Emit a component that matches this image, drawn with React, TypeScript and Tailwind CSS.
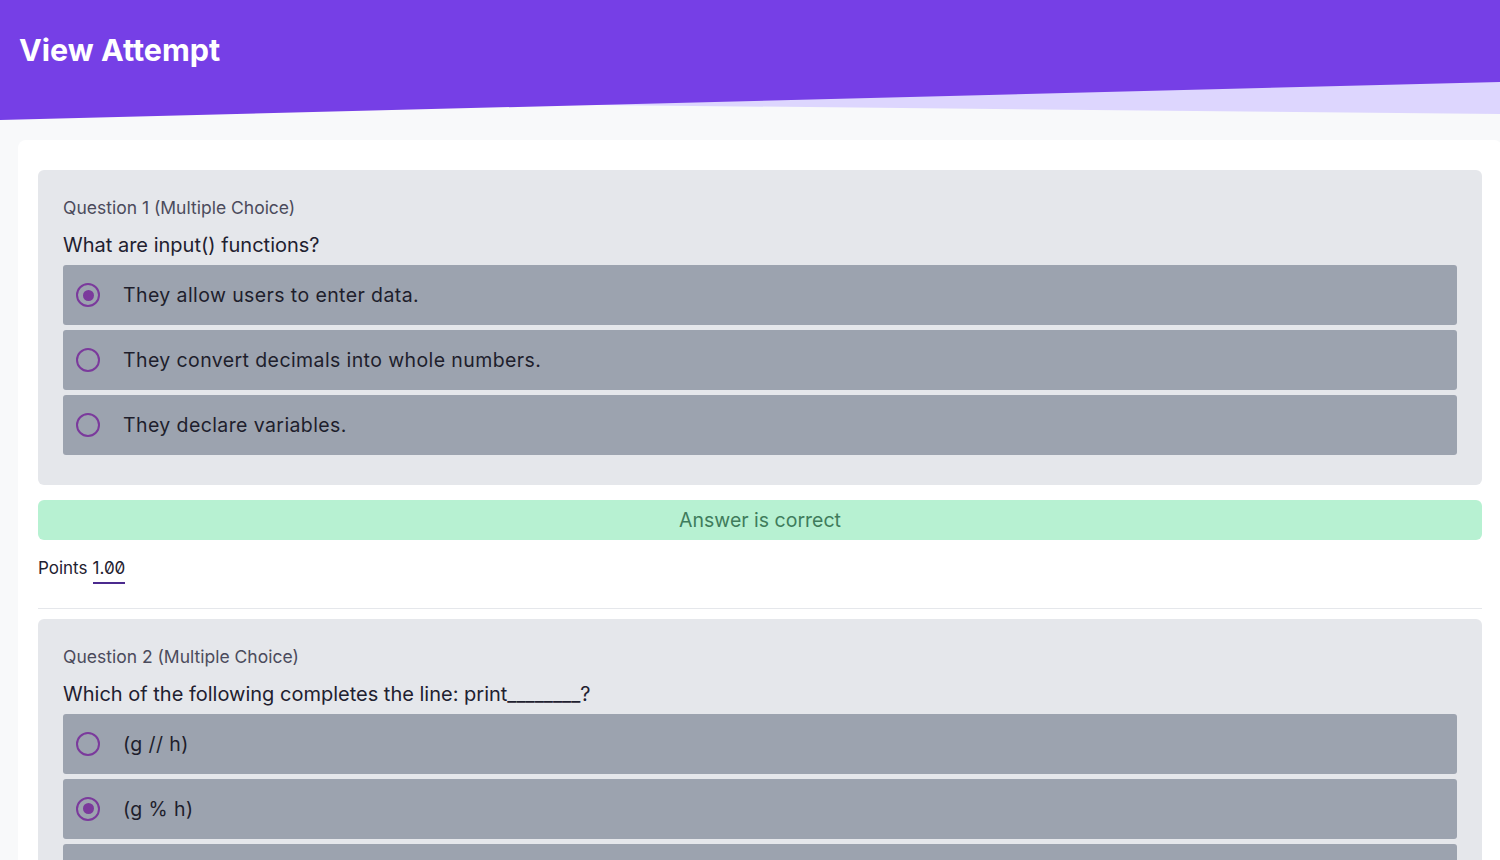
import React from 'react'

interface Option {
    text: string
    selected?: boolean
}

interface Question {
    label: string
    prompt: string
    options: Option[]
}

const questions: Question[] = [
    {
        label: 'Question 1 (Multiple Choice)',
        prompt: 'What are input() functions?',
        options: [
            { text: 'They allow users to enter data.', selected: true },
            { text: 'They convert decimals into whole numbers.' },
            { text: 'They declare variables.' },
        ],
    },
    {
        label: 'Question 2 (Multiple Choice)',
        prompt: 'Which of the following completes the line: print________?',
        options: [
            { text: '(g // h)' },
            { text: '(g % h)', selected: true },
            { text: '(g / h)' },
        ],
    },
]

const Radio = ({ checked }: { checked?: boolean }) => (
    <span className="w-6 h-6 rounded-full border-[2.5px] border-[#7b3a9c] flex items-center justify-center shrink-0">
        {checked && <span className="w-[11px] h-[11px] rounded-full bg-[#7b3a9c]" />}
    </span>
)

const QuestionPanel = ({ q }: { q: Question }) => (
    <div className="bg-[#e5e7eb] rounded-md px-[25px] pt-[27px] pb-[30px]">
        <div className="text-[17.5px] leading-[22px] text-[#4b4b5c]">{q.label}</div>
        <div className="text-[20px] leading-[26px] text-[#1f2130] mt-[13px] mb-[7px]">{q.prompt}</div>
        <div className="flex flex-col gap-[5px]">
            {q.options.map((o) => (
                <div
                    key={o.text}
                    className="h-[60px] bg-[#9ca3af] rounded-[3px] flex items-center pl-[13px] gap-[23px]"
                >
                    <Radio checked={o.selected} />
                    <span className="pt-[2px] text-[19.5px] tracking-[0.4px] text-[#1e1e2c]">{o.text}</span>
                </div>
            ))}
        </div>
    </div>
)

export default function App() {
    return (
        <div className="min-h-screen bg-[#f8f9fa] font-['Inter',sans-serif] overflow-hidden">
            {/* Header */}
            <header className="relative h-[120px]">
                <svg
                    className="absolute inset-0 w-full h-full"
                    viewBox="0 0 1500 120"
                    preserveAspectRatio="none"
                >
                    <polygon points="0,0 1500,0 1500,114 600,105 0,100" fill="#ddd6fe" />
                    <polygon points="0,0 1500,0 1500,82 0,120" fill="#763fe6" />
                </svg>
                <h1 className="relative pl-[19px] pt-[31px] text-[30.5px] leading-[38px] font-bold text-white">
                    View Attempt
                </h1>
            </header>

            {/* Card */}
            <div className="mt-5 ml-[18px] mr-[-2px] bg-white rounded-lg px-5 pt-[30px]">
                <QuestionPanel q={questions[0]} />

                <div className="mt-[15px] h-10 bg-[#b7f1d2] rounded-md flex items-center justify-center pt-[2px] text-[19.5px] text-[#3f7c5c]">
                    Answer is correct
                </div>

                <div className="mt-[16px] text-[17px] text-[#1f2130] flex items-start gap-[5px]">
                    <span>Points</span>
                    <span className="slashed-zero border-b-2 border-[#4b2a8e] pb-0">1.00</span>
                </div>

                <div className="mt-[24px] border-t border-[#e5e7eb]" />

                <div className="mt-[10px]">
                    <QuestionPanel q={questions[1]} />
                </div>
            </div>
        </div>
    )
}
